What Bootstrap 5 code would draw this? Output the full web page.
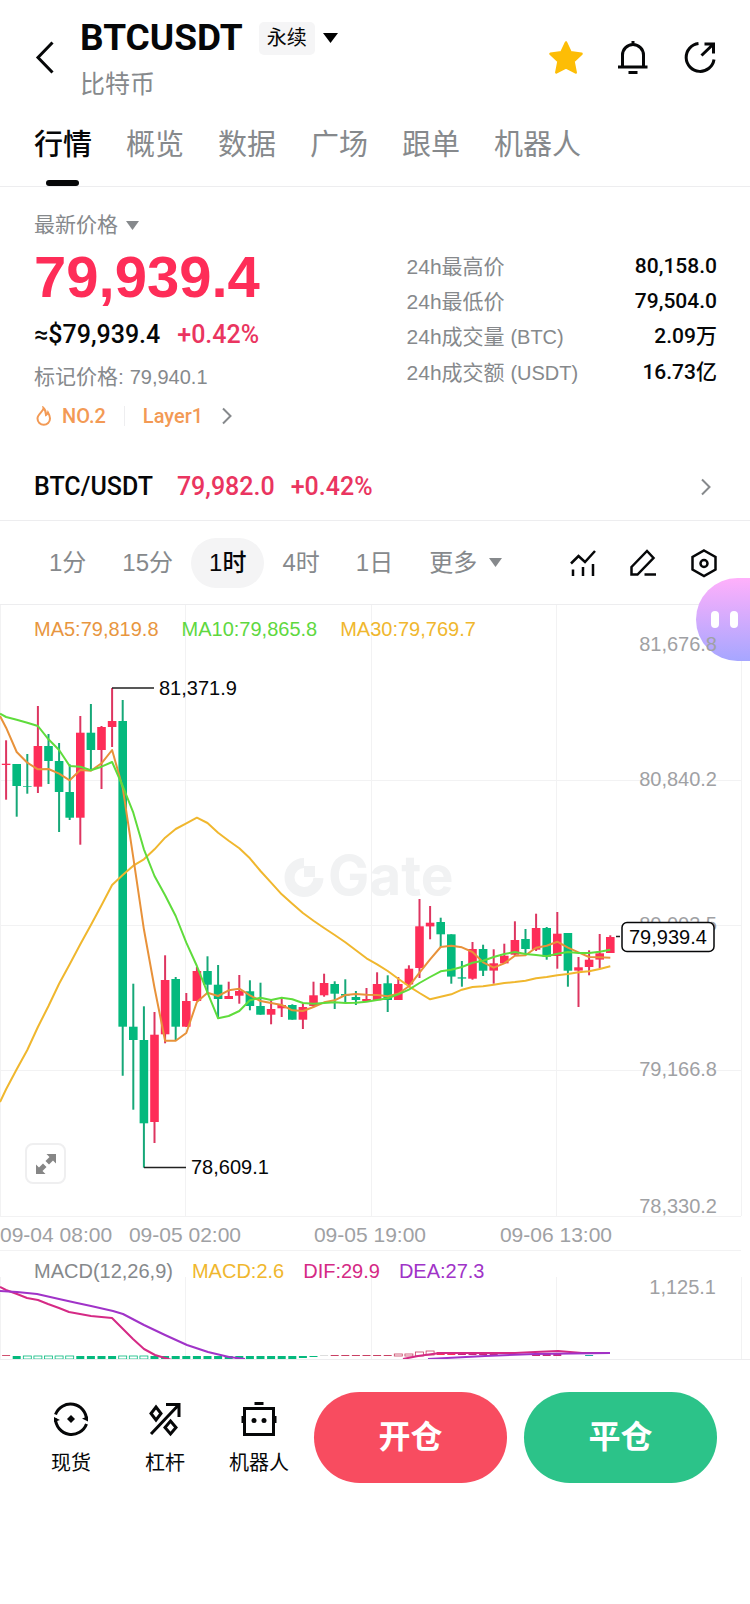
<!DOCTYPE html>
<html lang="zh-CN">
<head>
<meta charset="utf-8">
<meta name="viewport" content="width=device-width, initial-scale=1">
<title>BTCUSDT 永续</title>
<link href="https://cdn.jsdelivr.net/npm/bootstrap@5.3.0/dist/css/bootstrap.min.css" rel="stylesheet">
<style>
  :root { --ink: #060708; --muted: #86898c; --faint: #9fa1a4; --up: #fe2d58; --orange: #f39a55; }
  body { font-family: "Liberation Sans", "Noto Sans CJK SC", sans-serif; color: var(--ink); background: #fff; font-size: 21px; }
  .plain { background: none; border: 0; padding: 0; color: inherit; text-decoration: none; }
  .medium { font-family: Roboto, "Noto Sans CJK SC", sans-serif; font-weight: 500; }
  .dim { color: var(--muted); }
  .rise { color: #ea3560; }
  .latin { font-size: 20px; }
  .edge { padding-left: 34px; padding-right: 33px; }
  .ruled { border-bottom: 1px solid #ededef; }
  svg { display: block; }
  .line-icon { fill: none; stroke: currentColor; stroke-width: 3; }
  .line-icon.thin { stroke-width: 2; }

  .page-head { padding-top: 16px; }
  .page-head h1 { font: 700 37px/44px Roboto, sans-serif; margin: 0; }
  .page-head p { font-size: 25px; line-height: 32px; margin: 8px 0 0; }
  .head-tools { gap: 33px; }
  .kind { background: #f5f5f6; border-radius: 5px; font-size: 20px; line-height: 33px; padding: 0 8px; }

  .tabs { gap: 34px; padding-top: 24px; }
  .tabs a { font-size: 29px; line-height: 42px; padding-bottom: 20px; position: relative; white-space: nowrap; }
  .tabs a.active { font-weight: 500; }
  .tabs a.active::after { content: ""; position: absolute; left: 50%; bottom: 0; width: 33px; height: 6px; margin-left: -17px; border-radius: 3px; background: var(--ink); }

  .quote { display: grid; grid-template-columns: 6fr 5fr; padding-top: 23px; }
  .quote .pick { line-height: 30px; }
  .quote .last { font-size: 58px; font-weight: 700; line-height: 74px; color: var(--up); }
  .quote .approx { font-size: 25px; line-height: 42px; gap: 17px; }
  .quote .mark-price { line-height: 42px; }
  .quote .tags { color: var(--orange); font-size: 20px; line-height: 36px; }
  .tags .bar { width: 1px; height: 20px; background: #eeeef0; margin: 0 18px; }
  .stats { padding-top: 39px; line-height: 35px; }
  .spot { font-size: 25px; line-height: 66px; margin-top: 20px; }

  .periods { height: 84px; padding-left: 31px; padding-right: 33px; }
  .periods .span { font-size: 24px; line-height: 50px; padding: 0 18px; border-radius: 25px; color: var(--muted); white-space: nowrap; }
  .periods .span.active { background: #f4f4f5; color: var(--ink); font-weight: 500; }
  .tools { gap: 26px; }
  .tools .line-icon { stroke-width: 2.5; }

  .chart > svg { width: 100%; height: auto; position: relative; pointer-events: none; }
  .legend { position: absolute; left: 34px; top: 9px; font-size: 20px; line-height: 30px; gap: 23px; white-space: nowrap; }
  .legend.tight { gap: 19px; top: 5px; }
  .axis { font-size: 20px; fill: var(--faint); }
  .dates { font-size: 21px; }
  .expand { position: absolute; left: 25px; bottom: 67px; width: 41px; height: 41px; border: 2px solid #efeff0; border-radius: 8px; background: #fff; padding: 0; }
  .helper { position: absolute; right: 0; top: -27px; width: 54px; height: 83px; border: 0; border-radius: 42px 0 0 42px; background: linear-gradient(#ffb0fb, #a6a6ff); padding: 0 0 0 15px; gap: 11px; }
  .helper span { width: 8px; height: 17px; border-radius: 4px; background: #fff; }

  .actions { padding: 32px 33px 0 24px; gap: 8px; }
  .actions .action { width: 94px; font-size: 20px; line-height: 28px; gap: 10px; }
  .trade { gap: 17px; }
  .trade .btn { flex: 1 1 0; color: #fff; font-size: 32px; font-weight: 700; line-height: 91px; padding: 0; border: 0; }
  .open-pos { background: #f84c60; }
  .close-pos { background: #2cc389; }
</style>
</head>
<body>

<header class="page-head edge d-flex align-items-center">
  <button class="plain" aria-label="返回"><svg class="line-icon" width="46" height="34" viewBox="0 0 46 34"><path d="M18.500 1.500 4 16.500l14.500 15"/></svg></button>
  <div class="me-auto">
    <div class="d-flex align-items-center">
      <h1>BTCUSDT</h1>
      <span class="kind ms-3">永续</span>
      <svg class="ms-2" width="15" height="10" viewBox="0 0 15 10"><path d="M0 0h15L7.500 10z"/></svg>
    </div>
    <p class="dim">比特币</p>
  </div>
  <div class="head-tools d-flex">
    <button class="plain" aria-label="收藏"><svg width="34" height="34" viewBox="0 0 34 34"><path d="M17 1.500l4.600 9.800 10.900 1.500-8 7.500 2.200 11.200L17 26.300l-9.700 5.200 2.200-11.200-8-7.500 10.900-1.500z" fill="#fdbd06" stroke="#fdbd06" stroke-width="2.500" stroke-linejoin="round"/></svg></button>
    <button class="plain" aria-label="提醒"><svg class="line-icon" width="34" height="34" viewBox="0 0 34 34"><path d="M2 26h29.500M6.500 26V14a10.500 10.500 0 0 1 21 0v12M17 4V0M12.500 31.500h9"/></svg></button>
    <button class="plain" aria-label="分享"><svg class="line-icon" width="34" height="34" viewBox="0 0 34 34"><path d="M15.500 2.500A14 14 0 1 0 31 18.500M18.500 14.500 30.500 3M21.500 3h9v9.500"/></svg></button>
  </div>
</header>

<nav class="tabs edge ruled d-flex">
  <a class="plain active" href="#quote">行情</a>
  <a class="plain dim" href="#overview">概览</a>
  <a class="plain dim" href="#data">数据</a>
  <a class="plain dim" href="#square">广场</a>
  <a class="plain dim" href="#copy">跟单</a>
  <a class="plain dim" href="#bots">机器人</a>
</nav>

<main>
  <section class="quote edge" id="quote">
    <div>
      <button class="plain dim pick d-flex align-items-center gap-2">最新价格
        <svg width="13" height="9" viewBox="0 0 13 9"><path d="M0 0h13L6.500 9z" fill="#86898c"/></svg></button>
      <div class="last">79,939.4</div>
      <div class="approx medium d-flex"><span>≈$79,939.4</span><span class="rise">+0.42%</span></div>
      <div class="mark-price dim">标记价格: <span class="latin">79,940.1</span></div>
      <a class="tags plain medium d-flex align-items-center" href="#rank">
        <svg class="me-2" width="20" height="20" viewBox="0 0 20 20" fill="none" stroke="#f39a55" stroke-width="2"><path d="M9.500 2c.5 3-6 6-6 10.500a6.200 6.200 0 0 0 12.500 0c0-2-.8-4-2-6-.4 1.300-1 2-2 2.500C12 6 11 3.500 9.500 2z"/></svg>
        <span>NO.2</span><span class="bar"></span><span>Layer1</span>
        <svg class="ms-3 line-icon thin dim" width="14" height="18" viewBox="0 0 14 18"><path d="M4 1.500 11.500 9 4 16.500"/></svg>
      </a>
    </div>
    <div class="stats">
      <div class="d-flex justify-content-between"><span class="dim">24h最高价</span><span class="medium">80,158.0</span></div>
      <div class="d-flex justify-content-between"><span class="dim">24h最低价</span><span class="medium">79,504.0</span></div>
      <div class="d-flex justify-content-between"><span class="dim">24h成交量 <span class="latin">(BTC)</span></span><span class="medium">2.09万</span></div>
      <div class="d-flex justify-content-between"><span class="dim">24h成交额 <span class="latin">(USDT)</span></span><span class="medium">16.73亿</span></div>
    </div>
  </section>

  <div class="edge ruled">
    <a class="spot plain medium d-flex align-items-center" href="#spot">
      <span>BTC/USDT</span><span class="rise ms-4">79,982.0</span><span class="rise ms-3">+0.42%</span>
      <svg class="ms-auto line-icon thin dim" width="18" height="18" viewBox="0 0 18 18"><path d="M3 1.500 10.500 9 3 16.500"/></svg>
    </a>
  </div>

  <div class="periods ruled d-flex align-items-center justify-content-between">
    <div class="d-flex">
      <button class="plain span">1分</button>
      <button class="plain span">15分</button>
      <button class="plain span active">1时</button>
      <button class="plain span">4时</button>
      <button class="plain span">1日</button>
      <button class="plain span d-flex align-items-center gap-2">更多 <svg class="ms-1" width="13" height="9" viewBox="0 0 13 9"><path d="M0 0h13L6.500 9z" fill="#86898c"/></svg></button>
    </div>
    <div class="tools d-flex">
      <button class="plain" aria-label="指标"><svg class="line-icon" width="34" height="34" viewBox="0 0 34 34"><path d="M8 17.500 15.500 10l6.500 6L32 5M10 23.500V30M20 21v9M30 18v12"/></svg></button>
      <button class="plain" aria-label="画线"><svg class="line-icon" width="34" height="34" viewBox="0 0 34 34"><path d="M8.500 21 24 5l6.500 7L14.500 28.500h-6zM21.500 28.500H33"/></svg></button>
      <button class="plain" aria-label="设置"><svg class="line-icon" width="34" height="34" viewBox="0 0 34 34"><path d="M21 4.500 32.500 11v12.500L21 30 9.500 23.500V11z"/><circle cx="21" cy="17.500" r="3.500"/></svg></button>
    </div>
  </div>

  <section class="chart position-relative">
    <button class="helper d-flex align-items-center" aria-label="助手"><span></span><span></span></button>
    <svg id="kline" viewBox="0 0 750 646" role="img" aria-label="K线图">
      <path d="M.5 0v611M185.500 0v611M371.500 0v611M556.500 0v611M741.500 56v555M0 175.500h741M0 320.500h741M0 465.500h741M0 611.500h741M0 645.500h741" stroke="#f2f2f3" fill="none"/>
      <g fill="#f1f2f3">
        <path d="M304 258a14.500 14.500 0 1 0 14.500 15" fill="none" stroke="#f1f2f3" stroke-width="10"/>
        <path d="M304 261h11v11h-11z"/>
        <text x="328" y="290" font-family="Inter" font-weight="700" font-size="55">Gate</text>
      </g>
      <g class="axis" text-anchor="end">
        <text x="717" y="46">81,676.8</text>
        <text x="717" y="181">80,840.2</text>
        <text x="717" y="326">80,003.5</text>
        <text x="717" y="471">79,166.8</text>
        <text x="717" y="608">78,330.2</text>
      </g>
      <g class="axis dates" text-anchor="middle">
        <text x="0" y="637" text-anchor="start">09-04 08:00</text>
        <text x="185" y="637">09-05 02:00</text>
        <text x="370" y="637">09-05 19:00</text>
        <text x="556" y="637">09-06 13:00</text>
      </g>
      <g id="candles"></g>
      <g id="averages" fill="none" stroke-width="2" stroke-linejoin="round"></g>
      <g stroke="#222" stroke-width="1.500"><path d="M112 83h42M144 562.500h42M616 331.500h4"/></g>
      <g font-size="20" fill="#060708">
        <text x="159" y="90">81,371.9</text>
        <text x="191" y="569">78,609.1</text>
        <rect x="622" y="317.500" width="92" height="29" rx="5" fill="#fff" stroke="#060708" stroke-width="1.500"/>
        <text x="629" y="339">79,939.4</text>
      </g>
    </svg>
    <div class="legend d-flex">
      <span style="color:#e8963f">MA5:79,819.8</span><span style="color:#5fd83f">MA10:79,865.8</span><span style="color:#f0b72e">MA30:79,769.7</span>
    </div>
    <button class="expand d-flex align-items-center justify-content-center" aria-label="全屏">
      <svg width="20" height="20" viewBox="0 0 20 20" fill="#868686"><path d="M10.500 0H20v9.500l-3-3-4 4L9.500 7l4-4zM0 10.500l3 3 4-4L10.500 13l-4 4 3 3H0z"/></svg>
    </button>
  </section>

  <section class="chart ruled position-relative">
    <svg id="macd" viewBox="0 0 750 108" role="img" aria-label="MACD">
      <path d="M.5 26v82M185.500 26v82M371.500 26v82M556.500 26v82M741.500 26v82" stroke="#f2f2f3"/>
      <text class="axis" x="716" y="43" text-anchor="end">1,125.1</text>
      <g id="bars"></g>
      <g fill="none" stroke-width="2" stroke-linejoin="round">
        <path stroke="#d52a85" d="M0 36 6 39 17 43 27 47 38 49 48 53 59 57 69 61 80 63 91 65 112 67 123 78 133 88 144 98 155 104 165 107 172 109M403 108 418 105 440 102 515 102 535 101 558 100 582 102 610 102"/>
        <path stroke="#a033c8" d="M0 40 17 41 37 43 59 48 77 52 91 55 113 60 123 63 144 74 165 84 187 94 208 101 229 106 245 108M428 108 485 105 535 103 610 102"/>
      </g>
    </svg>
    <div class="legend tight d-flex">
      <span class="dim">MACD(12,26,9)</span><span style="color:#f0b72e">MACD:2.6</span><span style="color:#d52a85">DIF:29.9</span><span style="color:#a033c8">DEA:27.3</span>
    </div>
  </section>
</main>

<footer class="actions d-flex align-items-center">
  <div class="d-flex">
    <a class="action plain d-flex flex-column align-items-center" href="#spot"><svg class="line-icon" width="40" height="40" viewBox="0 0 40 40"><path d="M4.500 15.500A16 16 0 0 1 35.500 21M35.500 25A16 16 0 0 1 4.500 19.500"/><path d="M37 17.500v5l-6-3zM3 23v-5l6 3zM20 16l4 4-4 4-4-4z" fill="currentColor" stroke="none"/></svg>现货</a>
    <a class="action plain d-flex flex-column align-items-center" href="#margin"><svg class="line-icon" width="40" height="40" viewBox="0 0 40 40"><path d="M6 35 33.500 6M21 5.500h13V18M11 8l5 6.500-5 6.500-5-6.500zM25.500 22l5.500 6.500-5.500 6.500-5.500-6.500z"/></svg>杠杆</a>
    <a class="action plain d-flex flex-column align-items-center" href="#bots"><svg class="line-icon" width="40" height="40" viewBox="0 0 40 40"><path d="M5.500 9.500h29v26h-29zM15.500 4.500h9M4 17v7M36 17v7"/><circle cx="15" cy="21.500" r="2.500" fill="currentColor" stroke="none"/><circle cx="25" cy="21.500" r="2.500" fill="currentColor" stroke="none"/></svg>机器人</a>
  </div>
  <div class="trade d-flex flex-grow-1">
    <button class="btn rounded-pill open-pos">开仓</button>
    <button class="btn rounded-pill close-pos">平仓</button>
  </div>
</footer>

<script src="https://cdn.jsdelivr.net/npm/bootstrap@5.3.0/dist/js/bootstrap.bundle.min.js"></script>
<script>
  const UP = '#fe2d58', DOWN = '#04b97d', STEP = 10.6, FIRST = 6.1;
  const px = i => (FIRST + i * STEP).toFixed(1);
  const py = v => (66 + v / 3).toFixed(1);

  // One row per hour: wick top, wick bottom, body top, body bottom, 1 = rising
  const candles = [
    [208,386,278,282,1],[279,437,279,345,0],[249,368,345,347,0],[105,366,225,347,1],[189,339,225,270,0],[216,483,270,363,0],
    [280,447,363,440,0],[135,521,185,440,1],[99,300,185,237,0],[165,354,168,237,1],[51,228,150,168,1],[87,1214,150,1067,0],
    [938,1316,1067,1107,0],[1006,1490,1107,1357,0],[1023,1416,1091,1353,1],[853,1117,927,1090,1],[918,1108,924,1067,0],
    [966,1068,990,1067,1],[888,990,900,990,1],[856,965,900,941,0],[882,1042,941,984,0],[932,984,975,984,1],[912,998,960,974,1],
    [928,1018,961,1005,0],[935,1031,1005,1031,0],[987,1060,1014,1031,1],[984,1038,1002,1012,1],[1000,1046,1002,1046,0],
    [998,1074,1008,1046,1],[932,1008,973,1005,1],[908,977,936,973,1],[931,1014,939,968,0],[925,995,969,974,0],[960,1002,978,987,0],
    [951,990,984,990,1],[904,988,939,988,1],[913,1023,937,987,0],[918,987,939,987,1],[883,942,893,940,1],[684,921,766,891,1],
    [705,805,755,766,1],[740,828,753,790,0],[790,938,790,917,0],[870,947,919,923,0],[813,926,834,923,1],[821,915,834,899,0],
    [835,938,877,899,1],[818,879,854,877,1],[751,854,807,851,1],[774,850,804,834,0],[728,840,771,836,1],[768,866,771,857,0],
    [723,893,788,855,1],[786,947,786,899,0],[858,1008,889,899,1],[838,913,866,888,1],[789,892,847,866,1],[793,846,798,846,1]
  ];
  document.getElementById('candles').innerHTML = candles.map(([hi, lo, a, b, rising], i) => {
    const x = +px(i), c = rising ? UP : DOWN, wick = rising ? '#dd3560' : '#16a878';
    return `<path d="M${x} ${py(hi)}V${py(lo)}" stroke="${wick}" stroke-width="2"/>` +
      `<rect x="${(x - 4.3).toFixed(1)}" y="${py(a)}" width="8.600" height="${((b - a) / 3).toFixed(1)}" fill="${c}"/>`;
  }).join('');

  // The first value of each average is its height at the left edge
  const averages = {
    '#f0b72e': [1293,1255,1195,1137,1068,1005,938,880,820,762,703,642,612,584,565,535,500,474,457,440,456,485,509,532,562,600,635,670,698,726,749,771,792,814,838,862,880,900,923,946,966,985,977,970,956,948,946,941,936,933,929,922,918,913,909,904,901,894,886],
    '#e8923a': [135,170,243,275,295,294,308,328,297,299,277,237,350,560,775,950,1109,1109,1086,993,965,975,958,953,973,990,996,1002,1018,1020,1008,994,988,972,969,971,972,976,968,946,905,865,828,824,829,843,874,890,877,854,853,830,824,812,830,844,858,859,860],
    '#5fdc3c': [128,138,146,155,165,205,237,285,287,298,287,273,345,425,535,615,673,735,815,885,965,1042,1035,1020,988,980,987,980,985,996,998,996,994,996,995,992,987,982,970,956,936,918,901,896,888,875,869,858,849,843,849,852,856,848,843,846,846,842,836]
  };
  document.getElementById('averages').innerHTML = Object.entries(averages).map(([c, vs]) =>
    `<path stroke="${c}" d="M${vs.map((v, i) => (i ? px(i - 1) : 0) + ' ' + py(v)).join('L')}"/>`).join('');

  // Histogram: first index, last index, top, height, colour, hollow
  const runs = [
    [0,0,104,1,'#d0506f',0],[1,1,105,3,DOWN,0],[2,6,105,3,DOWN,1],[7,10,105,3,DOWN,0],[11,13,105,3,DOWN,1],[14,27,105,3,DOWN,0],
    [28,28,105,2,DOWN,0],[29,29,105,1,DOWN,0],[30,30,104,1,'#dddddd',0],[31,36,104,1,'#c94063',0],[37,38,103,2,'#c94063',1],
    [39,39,101,4,'#c94063',1],[40,40,100,4,'#c94063',1],[41,41,101,3,UP,0],[42,42,101,3,UP,0],[43,46,102,2,'#c92678',0],
    [50,52,103,2,'#c92678',0],[55,55,104,1,'#26a6a0',0]
  ];
  document.getElementById('bars').innerHTML = runs.map(([from, to, y, h, c, hollow]) => {
    let out = '';
    for (let i = from; i <= to; i++) {
      const x = +px(i) - 4;
      out += hollow
        ? `<rect x="${x.toFixed(1)}" y="${y}" width="8" height="${h}" fill="none" stroke="${c}" stroke-width=".8"/>`
        : `<rect x="${x.toFixed(1)}" y="${y}" width="8" height="${h}" fill="${c}"/>`;
    }
    return out;
  }).join('');
</script>
</body>
</html>
